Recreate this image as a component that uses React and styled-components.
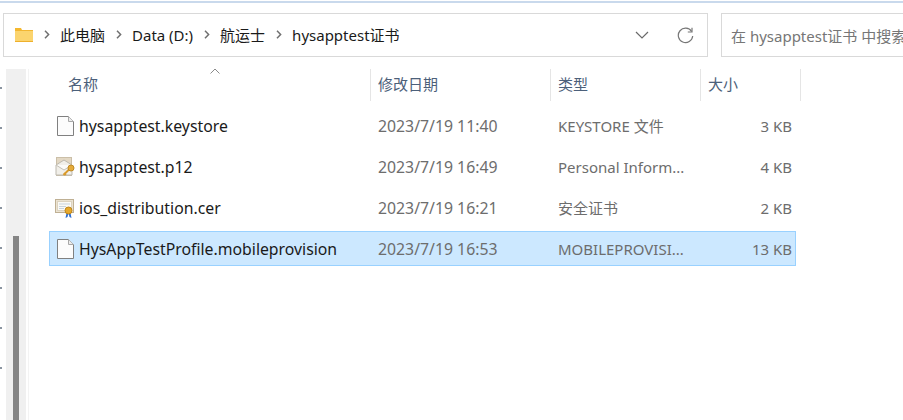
import React from 'react';
import styled, { createGlobalStyle } from 'styled-components';

const FONT = `"Noto Sans", "Noto Sans CJK SC", sans-serif`;

const GlobalStyle = createGlobalStyle`
  html, body { margin: 0; padding: 0; background: #fff; overflow: hidden; }
  body { font-family: ${FONT}; }
`;

const files = [
  { name: 'hysapptest.keystore', date: '2023/7/19 11:40', type: 'KEYSTORE 文件', size: '3 KB', icon: 'file' },
  { name: 'hysapptest.p12', date: '2023/7/19 16:49', type: 'Personal Inform...', size: '4 KB', icon: 'key' },
  { name: 'ios_distribution.cer', date: '2023/7/19 16:21', type: '安全证书', size: '2 KB', icon: 'cert' },
  { name: 'HysAppTestProfile.mobileprovision', date: '2023/7/19 16:53', type: 'MOBILEPROVISI...', size: '13 KB', icon: 'file', selected: true },
];

function FolderIcon() {
  return (
    <svg width="18" height="16" viewBox="0 0 18 16">
      <path d="M0 1h6l1 2v1H0z" fill="#f5b82e" />
      <rect x="0" y="3" width="18" height="12" fill="#fbd46e" />
      <rect x="0" y="3" width="18" height="1" fill="#f2b632" />
      <rect x="0" y="14" width="18" height="1" fill="#eeb02c" />
    </svg>
  );
}

function Chevron() {
  return (
    <svg width="6" height="9" viewBox="0 0 6 9">
      <path d="M1 .8 4.600 4.500 1 8.200" fill="none" stroke="#707070" strokeWidth="1.500" />
    </svg>
  );
}

function PlainFile() {
  return (
    <svg width="17" height="20" viewBox="0 0 17 20">
      <path d="M.5.5h11l5 5v14H.5z" fill="#fcfcfc" stroke="#808080" />
      <path d="M11.500.5v5h5" fill="#ececec" stroke="#a8a8a8" />
    </svg>
  );
}

function KeyFile() {
  return (
    <svg width="20" height="20" viewBox="0 0 20 20">
      <rect x="1.500" y=".5" width="15" height="18" fill="#e3d8c4" stroke="#cbbfa8" />
      <path d="M1 8l8-5 8 5v10H1z" fill="#f1efe9" stroke="#bdb9af" />
      <path d="M1 8l8 5 8-5" fill="#fbfbf9" stroke="#c4c0b6" />
      <path d="M8.500 18l6-6" stroke="#d99a2b" strokeWidth="2" />
      <path d="M9 16l2 2" stroke="#d99a2b" strokeWidth="1.500" />
      <circle cx="16" cy="11" r="3" fill="#e5ab3a" stroke="#c08a24" />
    </svg>
  );
}

function CertFile() {
  return (
    <svg width="20" height="20" viewBox="0 0 20 20">
      <rect x=".5" y="1.500" width="18" height="13" fill="#ebe3d2" stroke="#bfb094" />
      <rect x="2.500" y="3.500" width="14" height="9" fill="#fbfaf6" stroke="#dcd3c0" />
      <path d="M4 6h11M4 8.500h7M4 10.500h5" stroke="#c7d3de" />
      <path d="M11.500 15l-1 5 2-1 1-4zM15.500 15l1 5-2-1-1-4z" fill="#2f6fd0" />
      <circle cx="13.500" cy="12.500" r="3.500" fill="#e7a92c" stroke="#bd851c" />
    </svg>
  );
}

const icons = { file: PlainFile, key: KeyFile, cert: CertFile };

export default function App() {
  return (
    <Window>
      <GlobalStyle />
      <TopLine />
      <Toolbar>
        <AddressBar>
          <FolderIcon />
          <Crumbs>
            <CrumbSep><Chevron /></CrumbSep>
            <Crumb>此电脑</Crumb>
            <CrumbSep><Chevron /></CrumbSep>
            <Crumb>Data (D:)</Crumb>
            <CrumbSep><Chevron /></CrumbSep>
            <Crumb>航运士</Crumb>
            <CrumbSep><Chevron /></CrumbSep>
            <Crumb>hysapptest证书</Crumb>
          </Crumbs>
          <BarActions>
            <svg width="14" height="8" viewBox="0 0 14 8">
              <path d="M1 1l6 6 6-6" fill="none" stroke="#6a6a6a" strokeWidth="1.200" />
            </svg>
            <svg width="17" height="17" viewBox="0 0 17 17">
              <path d="M14.600 4.500A7.200 7.200 0 1 0 15.700 9" fill="none" stroke="#777" strokeWidth="1.200" />
              <path d="M15 .8v4.200h-4.200" fill="none" stroke="#777" strokeWidth="1.200" />
            </svg>
          </BarActions>
        </AddressBar>
        <SearchBox>在 hysapptest证书 中搜索</SearchBox>
      </Toolbar>
      <Body>
        <Dots>
          {[0, 1, 2, 3, 4, 5, 6, 7].map(i => <Dot key={i} />)}
        </Dots>
        <ScrollTrack>
          <ScrollThumb />
        </ScrollTrack>
        <Pane>
          <HeaderRow>
            <SortCaret>
              <svg width="10" height="6" viewBox="0 0 10 6">
                <path d="M.5 5.500 5 1l4.500 4.500" fill="none" stroke="#8a8a8a" />
              </svg>
            </SortCaret>
            <HeaderCell $first>名称</HeaderCell>
            <HeaderCell>修改日期</HeaderCell>
            <HeaderCell>类型</HeaderCell>
            <HeaderCell>大小</HeaderCell>
          </HeaderRow>
          <Rows>
            {files.map(f => {
              const Icon = icons[f.icon];
              return (
                <Row key={f.name} $selected={f.selected}>
                  <NameCell>
                    <IconSlot><Icon /></IconSlot>
                    {f.name}
                  </NameCell>
                  <DateCell>{f.date}</DateCell>
                  <TypeCell>{f.type}</TypeCell>
                  <SizeCell>{f.size}</SizeCell>
                </Row>
              );
            })}
          </Rows>
        </Pane>
      </Body>
    </Window>
  );
}

const Window = styled.div`
  width: 903px;
  height: 420px;
  overflow: hidden;
  background: #fff;
  display: flex;
  flex-direction: column;
`;

const TopLine = styled.div`
  height: 2px;
  margin-top: 1px;
  background: #c9d9ec;
  flex: none;
`;

const Toolbar = styled.div`
  display: flex;
  gap: 13px;
  padding: 10px 0 0 3px;
  flex: none;
`;

const AddressBar = styled.div`
  width: 705px;
  height: 44px;
  flex: none;
  box-sizing: border-box;
  border: 1px solid #d9d9d9;
  display: flex;
  align-items: center;
  padding-left: 11px;
`;

const Crumbs = styled.div`
  display: flex;
  align-items: center;
  font-size: 15px;
  line-height: 20px;
  color: #1a1a1a;
  margin: -1px 0 0 11px;
  flex: 1;
`;

const CrumbSep = styled.span`
  display: flex;
  align-items: center;
  margin-right: 10px;
`;

const Crumb = styled.span`
  margin-right: 11px;
`;

const BarActions = styled.div`
  display: flex;
  align-items: center;
  gap: 28px;
  padding-right: 13px;
`;

const SearchBox = styled.div`
  flex: none;
  width: 200px;
  height: 44px;
  box-sizing: border-box;
  border: 1px solid #d9d9d9;
  display: flex;
  align-items: center;
  padding-left: 9px;
  font-size: 15px;
  color: #767676;
  white-space: nowrap;
  overflow: hidden;
`;

const Body = styled.div`
  flex: 1;
  display: flex;
  margin-top: 12px;
  min-height: 0;
`;

const Dots = styled.div`
  width: 6px;
  flex: none;
  display: flex;
  flex-direction: column;
  gap: 38px;
  padding-top: 18px;
`;

const Dot = styled.i`
  display: block;
  width: 2px;
  height: 2px;
  background: #8a94a0;
`;

const ScrollTrack = styled.div`
  width: 20px;
  flex: none;
  background: #f0f0f0;
  padding-top: 167px;
  box-sizing: border-box;
  display: flex;
  justify-content: center;
`;

const ScrollThumb = styled.div`
  width: 6px;
  height: 200px;
  background: #858585;
`;

const Pane = styled.div`
  flex: 1;
  margin-left: 2px;
  border-left: 1px solid #f3f3f3;
  position: relative;
`;

const HeaderRow = styled.div`
  display: grid;
  grid-template-columns: 342px 180px 150px 100px;
  height: 32px;
  position: relative;
`;

const SortCaret = styled.span`
  position: absolute;
  left: 181px;
  top: -1px;
  line-height: 0;
`;

const HeaderCell = styled.div`
  font-size: 15px;
  line-height: 30px;
  padding-bottom: 2px;
  color: #4c607a;
  display: flex;
  align-items: center;
  padding-left: ${p => (p.$first ? '39px' : '7px')};
  border-right: 1px solid #e5e5e5;
  box-sizing: border-box;
`;

const Rows = styled.div`
  display: flex;
  flex-direction: column;
  gap: 6px;
  margin: 7px 0 0 20px;
  width: 747px;
`;

const Row = styled.div`
  height: 35px;
  box-sizing: border-box;
  display: grid;
  grid-template-columns: 320px 180px 150px 92px;
  align-items: center;
  font-size: 15px;
  border: 1px solid ${p => (p.$selected ? '#99d1ff' : 'transparent')};
  background: ${p => (p.$selected ? '#cce8ff' : 'transparent')};
`;

const NameCell = styled.div`
  display: flex;
  align-items: center;
  color: #1a1a1a;
  font-size: 15.8px;
  white-space: nowrap;
`;

const IconSlot = styled.span`
  width: 20px;
  height: 20px;
  margin: 0 4px 0 5px;
  display: flex;
  align-items: center;
  justify-content: center;
`;

const DateCell = styled.div`
  color: #6d6d6d;
  font-size: 15.8px;
  padding-left: 8px;
  white-space: nowrap;
`;

const TypeCell = styled.div`
  color: #6d6d6d;
  padding-left: 8px;
  white-space: nowrap;
`;

const SizeCell = styled.div`
  color: #6d6d6d;
  text-align: right;
  white-space: nowrap;
`;
